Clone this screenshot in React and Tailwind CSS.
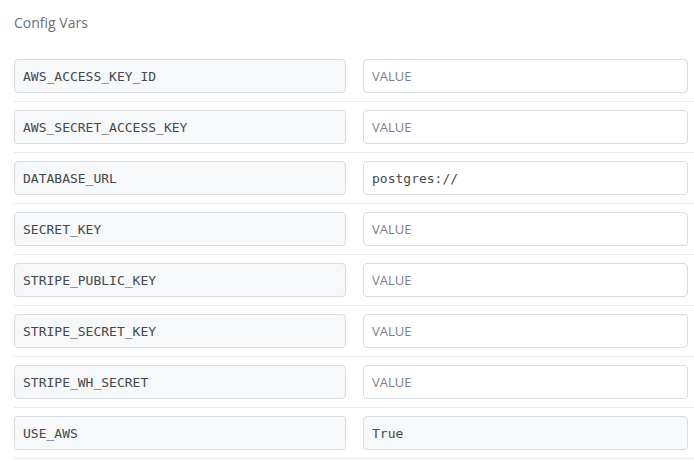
import React from 'react';

const vars = [
  { key: 'AWS_ACCESS_KEY_ID', value: '' },
  { key: 'AWS_SECRET_ACCESS_KEY', value: '' },
  { key: 'DATABASE_URL', value: 'postgres://' },
  { key: 'SECRET_KEY', value: '' },
  { key: 'STRIPE_PUBLIC_KEY', value: '' },
  { key: 'STRIPE_SECRET_KEY', value: '' },
  { key: 'STRIPE_WH_SECRET', value: '' },
  { key: 'USE_AWS', value: 'True', locked: true },
];

const mono = { fontFamily: '"DejaVu Sans Mono", monospace' };

const ConfigVars = () => {
  return (
    <div className="w-[694px] h-[460px] bg-white overflow-hidden pl-[14px] font-['Open_Sans',sans-serif]">
      <div className="h-[51px] pt-[12px] text-[14px] text-[#6b7078]">Config Vars</div>
      <div>
        {vars.map((v) => (
          <div key={v.key} className="flex gap-[17px] py-[8px] border-b border-[#e9ebee]">
            <input
              readOnly
              value={v.key}
              style={mono}
              className="w-[332px] h-[34px] px-[8px] rounded-[4px] border border-[#d6dce2] bg-[#f6f8fa] text-[13px] text-[#45484d] outline-none"
            />
            <input
              readOnly
              value={v.value}
              placeholder="VALUE"
              style={v.value ? mono : undefined}
              className={`w-[325px] h-[34px] px-[8px] rounded-[4px] border border-[#d6dce2] text-[13px] text-[#45484d] placeholder:text-[#7b8087] placeholder:font-['Open_Sans',sans-serif] outline-none ${
                v.locked ? 'bg-[#f6f8fa]' : 'bg-white'
              }`}
            />
          </div>
        ))}
      </div>
    </div>
  );
};

export default ConfigVars;
